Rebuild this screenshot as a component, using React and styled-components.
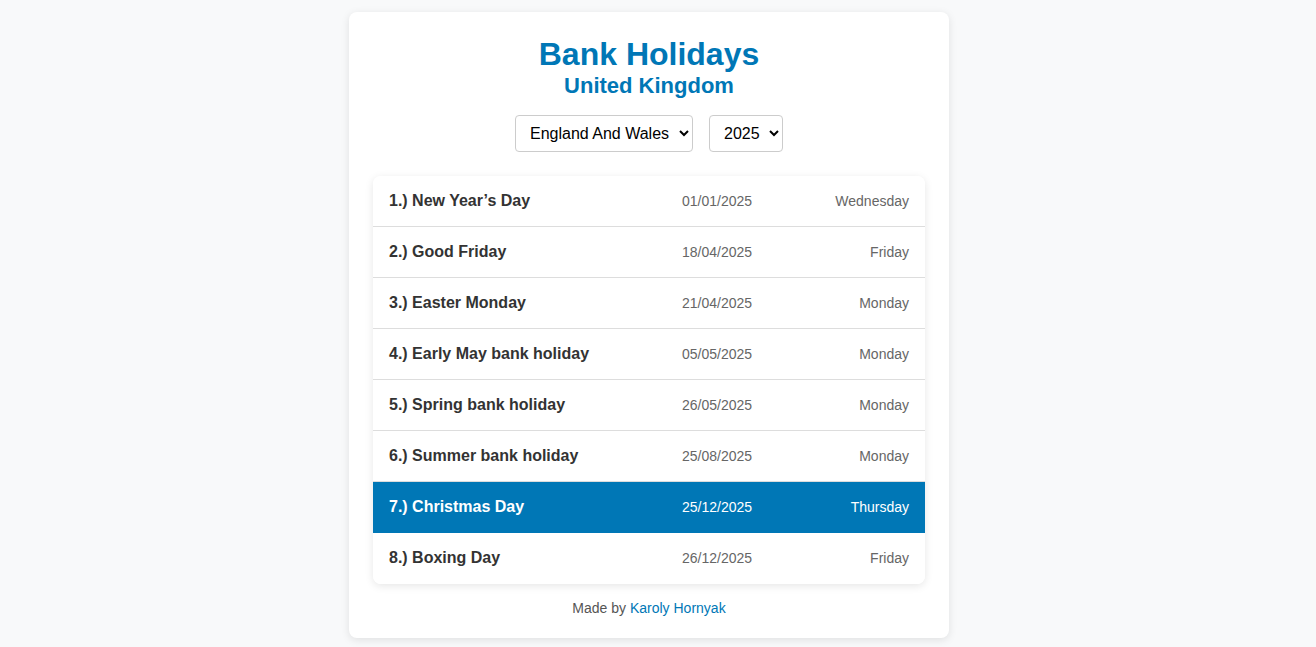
import React, { useState } from "react";
import styled, { createGlobalStyle } from "styled-components";

const holidays = [
  { title: "New Year’s Day", date: "01/01/2025", day: "Wednesday" },
  { title: "Good Friday", date: "18/04/2025", day: "Friday" },
  { title: "Easter Monday", date: "21/04/2025", day: "Monday" },
  { title: "Early May bank holiday", date: "05/05/2025", day: "Monday" },
  { title: "Spring bank holiday", date: "26/05/2025", day: "Monday" },
  { title: "Summer bank holiday", date: "25/08/2025", day: "Monday" },
  { title: "Christmas Day", date: "25/12/2025", day: "Thursday" },
  { title: "Boxing Day", date: "26/12/2025", day: "Friday" },
];

export default function App() {
  const [region, setRegion] = useState("england-and-wales");
  const [year, setYear] = useState("2025");
  const next = 6;

  return (
    <>
      <GlobalStyle />
      <Card>
        <Title>Bank Holidays</Title>
        <Subtitle>United Kingdom</Subtitle>
        <Controls>
          <Select value={region} onChange={(e) => setRegion(e.target.value)}>
            <option value="england-and-wales">England And Wales</option>
            <option value="scotland">Scotland</option>
            <option value="northern-ireland">Northern Ireland</option>
          </Select>
          <Select value={year} onChange={(e) => setYear(e.target.value)}>
            <option value="2024">2024</option>
            <option value="2025">2025</option>
            <option value="2026">2026</option>
          </Select>
        </Controls>
        <List>
          {holidays.map((h, i) => (
            <Row key={h.title} $active={i === next}>
              <Name $active={i === next}>{`${i + 1}.) ${h.title}`}</Name>
              <DateCell>{h.date}</DateCell>
              <Day>{h.day}</Day>
            </Row>
          ))}
        </List>
        <Footer>
          Made by <a href="#">Karoly Hornyak</a>
        </Footer>
      </Card>
    </>
  );
}

const GlobalStyle = createGlobalStyle`
  body {
    margin: 0;
    padding: 12px 18px 12px 0;
    background: #f8f9fa;
    font-family: "Liberation Sans", Arial, sans-serif;
  }
`;

const Card = styled.div`
  width: 600px;
  box-sizing: border-box;
  margin: 0 auto;
  background: #fff;
  border-radius: 8px;
  box-shadow: 0 2px 8px rgba(0, 0, 0, 0.1);
  padding: 24px 24px 22px;
  text-align: center;
`;

const Title = styled.h1`
  margin: 0;
  font-size: 32px;
  line-height: 36px;
  color: #0077b6;
`;

const Subtitle = styled.h2`
  margin: 0;
  font-size: 22px;
  line-height: 28px;
  color: #0077b6;
`;

const Controls = styled.div`
  display: flex;
  justify-content: center;
  gap: 16px;
  margin-top: 15px;
`;

const Select = styled.select`
  font-family: "Liberation Sans", Arial, sans-serif;
  font-size: 16px;
  height: 37px;
  padding: 0 6px 0 10px;
  border: 1px solid #ccc;
  border-radius: 4px;
  background: #fff;
  color: #000;
`;

const List = styled.div`
  margin-top: 24px;
  border-radius: 8px;
  box-shadow: 0 2px 8px rgba(0, 0, 0, 0.1);
  overflow: hidden;
  text-align: left;
`;

const Row = styled.div`
  display: grid;
  grid-template-columns: 2fr 1fr 1fr;
  align-items: center;
  height: 51px;
  box-sizing: border-box;
  padding: 0 16px;
  border-bottom: 1px solid ${(p) => (p.$active ? "#0077b6" : "#ddd")};
  background: ${(p) => (p.$active ? "#0077b6" : "#fff")};
  color: ${(p) => (p.$active ? "#fff" : "#666")};
  &:last-child {
    border-bottom-color: transparent;
  }
`;

const Name = styled.span`
  font-size: 16px;
  font-weight: bold;
  color: ${(p) => (p.$active ? "#fff" : "#333")};
`;

const DateCell = styled.span`
  font-size: 14px;
  text-align: center;
  padding-left: 6px;
`;

const Day = styled.span`
  font-size: 14px;
  text-align: right;
`;

const Footer = styled.p`
  margin: 16px 0 0;
  font-size: 14px;
  color: #555;
  a {
    color: #0077b6;
    text-decoration: none;
  }
`;
